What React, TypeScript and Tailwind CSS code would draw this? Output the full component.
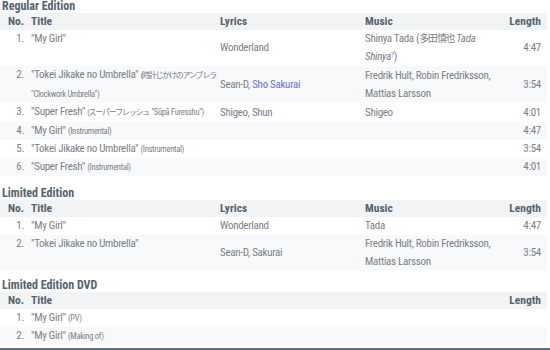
import type { ReactNode } from "react";

type Track = {
  no: number;
  title: ReactNode;
  lyrics?: ReactNode;
  music?: ReactNode;
  length: string;
};

const small = (text: ReactNode) => <span className="text-[8.5px] tracking-[-0.3px]">{text}</span>;
const smallJa = (text: ReactNode) => <span className="text-[8px] tracking-[-1.2px]">{text}</span>;

const regular: Track[] = [
  {
    no: 1,
    title: <>"My Girl"</>,
    lyrics: "Wonderland",
    music: (
      <>
        Shinya Tada (<span className="text-[10px] tracking-[-1.5px]">多田 慎也</span> <i>Tada</i>
        <br />
        <i>Shinya</i>
        <sup className="text-[7px] text-[#5b6fd0]">?</sup>)
      </>
    ),
    length: "4:47",
  },
  {
    no: 2,
    title: (
      <>
        "Tokei Jikake no Umbrella" {smallJa("(時計じかけのアンブレラ")}
        <br />
        {small('"Clockwork Umbrella")')}
      </>
    ),
    lyrics: (
      <>
        Sean-D, <span className="text-[#6676c8]">Sho Sakurai</span>
      </>
    ),
    music: (
      <>
        Fredrik Hult, Robin Fredriksson,
        <br />
        Mattias Larsson
      </>
    ),
    length: "3:54",
  },
  {
    no: 3,
    title: (
      <>
        "Super Fresh" {smallJa("(スーパーフレッシュ")} {small('"Sūpā Furesshu")')}
      </>
    ),
    lyrics: "Shigeo, Shun",
    music: "Shigeo",
    length: "4:01",
  },
  { no: 4, title: <>"My Girl" {small("(Instrumental)")}</>, length: "4:47" },
  { no: 5, title: <>"Tokei Jikake no Umbrella" {small("(Instrumental)")}</>, length: "3:54" },
  { no: 6, title: <>"Super Fresh" {small("(Instrumental)")}</>, length: "4:01" },
];

const limited: Track[] = [
  { no: 1, title: <>"My Girl"</>, lyrics: "Wonderland", music: "Tada", length: "4:47" },
  {
    no: 2,
    title: <>"Tokei Jikake no Umbrella"</>,
    lyrics: "Sean-D, Sakurai",
    music: (
      <>
        Fredrik Hult, Robin Fredriksson,
        <br />
        Mattias Larsson
      </>
    ),
    length: "3:54",
  },
];

const dvd: Track[] = [
  { no: 1, title: <>"My Girl" {small("(PV)")}</>, length: "" },
  { no: 2, title: <>"My Girl" {small("(Making of)")}</>, length: "" },
];

function TrackList({
  caption,
  tracks,
  credits = true,
  className = "",
  captionClass = "pt-[4px]",
}: {
  caption: string;
  tracks: Track[];
  credits?: boolean;
  className?: string;
  captionClass?: string;
}) {
  return (
    <section className={className}>
      <h2 className={`pl-[2px] text-[12px] font-bold leading-[13px] text-[#54636f] ${captionClass}`}>{caption}</h2>
      <table className="w-[547px] table-fixed border-collapse">
        <colgroup>
          <col className="w-[28px]" />
          <col className={credits ? "w-[189px]" : "w-[477px]"} />
          {credits && <col className="w-[145px]" />}
          {credits && <col className="w-[143px]" />}
          <col className="w-[42px]" />
        </colgroup>
        <thead>
          <tr className="bg-[#f1f3f4] text-[11.5px] font-bold leading-[17px] text-[#54636f]">
            <th className="pr-[4px] text-right">No.</th>
            <th className="pl-[3px] text-left">Title</th>
            {credits && <th className="pl-[3px] text-left">Lyrics</th>}
            {credits && <th className="pl-[3px] text-left">Music</th>}
            <th className="pr-[6px] text-right">Length</th>
          </tr>
        </thead>
        <tbody>
          {tracks.map((t) => (
            <tr
              key={t.no}
              className={`text-[11px] leading-[18px] tracking-[-0.3px] text-[#7b8087] ${t.no % 2 === 0 ? "bg-[#f8f9fa]" : "bg-white"}`}
            >
              <td className="pr-[4px] text-right align-top">{t.no}.</td>
              <td className="pl-[3px] align-top">{t.title}</td>
              {credits && <td className="pl-[3px] align-middle">{t.lyrics}</td>}
              {credits && <td className="pl-[3px] align-middle">{t.music}</td>}
              <td className="pr-[6px] text-right align-middle">{t.length}</td>
            </tr>
          ))}
        </tbody>
      </table>
    </section>
  );
}

export default function App() {
  return (
    <div className="flex h-[350px] w-[550px] flex-col overflow-hidden bg-white font-['Roboto','Noto_Sans_CJK_JP',sans-serif] [font-stretch:75%]">
      <TrackList caption="Regular Edition" tracks={regular} captionClass="pt-0" />
      <TrackList caption="Limited Edition" tracks={limited} className="mt-[7px]" />
      <TrackList caption="Limited Edition DVD" tracks={dvd} credits={false} className="mt-[4px]" />
      <div className="mt-auto h-[2px] bg-[#5d6d7a]" />
    </div>
  );
}
